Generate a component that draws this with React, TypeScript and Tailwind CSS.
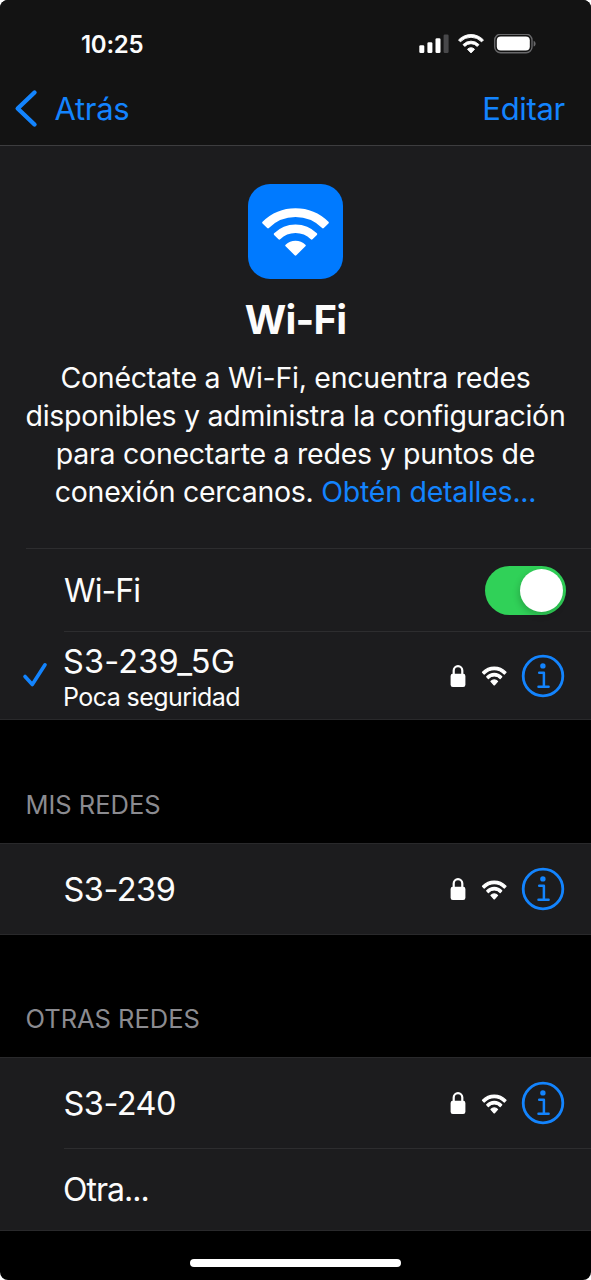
import React from "react";

type Ring = { inner: number; outer: number };

const rad = Math.PI / 4;
const f = (n: number) => n.toFixed(2);

function ringPath({ inner, outer }: Ring) {
  const s = Math.sin(rad);
  if (inner === 0) {
    return `M0 0L${f(-outer * s)} ${f(-outer * s)}A${outer} ${outer} 0 0 1 ${f(outer * s)} ${f(-outer * s)}Z`;
  }
  return `M${f(-inner * s)} ${f(-inner * s)}L${f(-outer * s)} ${f(-outer * s)}A${outer} ${outer} 0 0 1 ${f(outer * s)} ${f(-outer * s)}L${f(inner * s)} ${f(-inner * s)}A${inner} ${inner} 0 0 0 ${f(-inner * s)} ${f(-inner * s)}Z`;
}

const rings: Ring[] = [
  { inner: 39.4, outer: 46.1 },
  { inner: 23.2, outer: 29.5 },
  { inner: 0, outer: 13 },
];

function WifiGlyph({ className, weight = 2.4 }: { className?: string; weight?: number }) {
  return (
    <svg viewBox="-34 -47.5 68 49" preserveAspectRatio="none" className={className} fill="white" stroke="white" strokeWidth={weight} strokeLinejoin="round">
      {rings.map((r) => (
        <path key={r.outer} d={ringPath(r)} />
      ))}
    </svg>
  );
}

function SignalGlyph() {
  return (
    <svg viewBox="0 0 30 20" className="h-5 w-[30px]" fill="white">
      <rect x="0.3" y="11.3" width="5" height="7.7" rx="1.3" />
      <rect x="8.4" y="8.2" width="5" height="10.8" rx="1.3" />
      <rect x="16.5" y="4.2" width="5" height="14.8" rx="1.3" />
      <rect x="24.6" y="0.5" width="5" height="18.5" rx="1.3" fill="#48484a" />
    </svg>
  );
}

function BatteryGlyph() {
  return (
    <svg viewBox="0 0 42 20" className="h-5 w-[42px]">
      <rect x="0.7" y="0.3" width="37.300" height="18.400" rx="5.8" fill="none" stroke="#68686a" strokeWidth="1.4" />
      <rect x="2.8" y="2.500" width="33" height="14" rx="4" fill="white" />
      <path d="M39.600 6.8c1.3.5 2 1.6 2 2.9s-.7 2.400-2 2.900z" fill="#68686a" />
    </svg>
  );
}

function NetworkIcons() {
  return (
    <div className="flex items-center">
      <svg viewBox="0 0 16 22" className="h-[22px] w-4" fill="none">
        <rect x="0.6" y="8.800" width="14.8" height="13.200" rx="2.2" fill="white" />
        <path d="M3.700 10V5.600a4.300 4.500 0 0 1 8.600 0V10" stroke="white" strokeWidth="2.200" />
      </svg>
      <WifiGlyph weight={3.4} className="ml-4 h-[19px] w-[24.5px] translate-y-[0.5px] overflow-visible" />
      <svg viewBox="0 0 44 44" className="ml-[14.5px] h-11 w-11" fill="none" stroke="#1384fe">
        <circle cx="22" cy="22" r="19.800" strokeWidth="2.800" />
        <circle cx="21.900" cy="11.900" r="2.700" fill="#1384fe" stroke="none" />
        <path d="M18.200 18.800H22.900V32.600M17.500 32.700H27.600" strokeWidth="2.500" strokeLinecap="round" strokeLinejoin="round" />
      </svg>
    </div>
  );
}

function NetworkRow({ name, className }: { name: string; className: string }) {
  return (
    <div className={`flex items-center justify-between pl-[63.5px] pr-[26px] ${className}`}>
      <span className="pt-px text-[32.500px] leading-10 tracking-[-0.5px]">{name}</span>
      <NetworkIcons />
    </div>
  );
}

function SectionTitle({ children, className }: { children: React.ReactNode; className: string }) {
  return (
    <h2 className={`flex items-end pb-[22px] pl-[25.5px] text-[25.5px] font-normal leading-8 tracking-[-0.02px] text-[#8b8b90] ${className}`}>
      {children}
    </h2>
  );
}

export default function App() {
  return (
    <div className="h-[1280px] w-[591px] overflow-hidden bg-white">
      <div className="flex h-full flex-col overflow-hidden rounded-[8px] bg-black font-['Inter','Liberation_Sans',sans-serif] text-[#fcfcfc]">
        <header className="flex h-[146px] shrink-0 flex-col border-b border-[#3d3d3f] bg-[#131313]">
          <div className="flex h-[72px] items-start justify-between pl-[81px] pr-[55px] pt-[29px]">
            <span className="pt-px text-[24px] font-semibold leading-[30px] tracking-[-0.3px]">10:25</span>
            <div className="flex items-start pt-[5px]">
              <SignalGlyph />
              <WifiGlyph className="ml-[9px] h-[19.500px] w-[26px]" />
              <span className="ml-[10px]"><BatteryGlyph /></span>
            </div>
          </div>
          <nav className="flex h-[73px] items-center justify-between pl-[14px] pr-[26px] text-[#1384fe]">
            <div className="flex items-center">
              <svg viewBox="0 0 24 40" className="h-10 w-6" fill="none" stroke="#1384fe" strokeWidth="4.400" strokeLinecap="round" strokeLinejoin="round">
                <path d="M20.500 3.500L3.700 19.500L20.500 35.500" />
              </svg>
              <span className="ml-[16.5px] text-[31px] leading-10 tracking-[-0.3px]">Atrás</span>
            </div>
            <span className="text-[31px] leading-10 tracking-[-0.3px]">Editar</span>
          </nav>
        </header>

        <section className="flex h-[574px] shrink-0 flex-col border-b border-[#29292b] bg-[#1c1c1e]">
          <div className="flex h-[402px] flex-col items-center pt-[38px]">
            <div className="flex h-[95px] w-[95px] items-start justify-center rounded-[22px] bg-[#007aff] pt-[24px]">
              <WifiGlyph className="h-[48px] w-[67px]" />
            </div>
            <h1 className="mt-[17px] text-[40px] font-bold leading-12 tracking-[-0.8px]">Wi-Fi</h1>
            <p className="mt-[15px] whitespace-nowrap text-center text-[28.500px] leading-[38px] tracking-[-0.26px]">
              Conéctate a Wi-Fi, encuentra redes<br />
              disponibles y administra la configuración<br />
              para conectarte a redes y puntos de<br />
              conexión cercanos. <a className="text-[#1384fe]">Obtén detalles...</a>
            </p>
          </div>
          <div className="ml-[26px] flex h-[83px] items-center justify-between border-t border-[#2d2d2f] pl-[38px] pr-[25px]">
            <span className="pt-[2px] text-[32px] leading-10 tracking-[-0.9px]">Wi-Fi</span>
            <div className="flex h-[49px] w-[81px] items-center justify-end rounded-full bg-[#30d158] pr-[3px]">
              <div className="h-[43px] w-[43px] rounded-full bg-white shadow-[-1px_3px_7px_rgba(0,0,0,0.2)]" />
            </div>
          </div>
          <div className="flex h-[88px]">
            <div className="flex w-16 items-center pl-[22px]">
              <svg viewBox="0 0 26 26" className="h-[26px] w-[26px]" fill="none" stroke="#1384fe" strokeWidth="3.600" strokeLinecap="round" strokeLinejoin="round">
                <path d="M3 14.500L10.300 22.500L23 2.800" />
              </svg>
            </div>
            <div className="flex flex-1 items-center justify-between border-t border-[#2d2d2f] pr-[26px]">
              <div className="flex flex-col pt-[5px]">
                <span className="-ml-px text-[32.500px] leading-[38px] tracking-[0.15px]">S3-239_5G</span>
                <span className="-ml-px text-[25px] leading-8 tracking-[-0.56px]">Poca seguridad</span>
              </div>
              <NetworkIcons />
            </div>
          </div>
        </section>

        <SectionTitle className="h-[123px]">MIS REDES</SectionTitle>
        <section className="h-[92px] shrink-0 border-y border-[#29292b] bg-[#1c1c1e]">
          <NetworkRow name="S3-239" className="h-[90px]" />
        </section>

        <SectionTitle className="h-[122px]">OTRAS REDES</SectionTitle>
        <section className="h-[174px] shrink-0 border-y border-[#29292b] bg-[#1c1c1e]">
          <NetworkRow name="S3-240" className="h-[90px]" />
          <div className="ml-16 flex h-[82px] items-center border-t border-[#2d2d2f]">
            <span className="-ml-px pt-px text-[32px] leading-10 tracking-[-1px]">Otra...</span>
          </div>
        </section>
        <div className="flex justify-center pt-[28px]">
          <div className="h-2 w-[211px] rounded-full bg-white" />
        </div>
      </div>
    </div>
  );
}
